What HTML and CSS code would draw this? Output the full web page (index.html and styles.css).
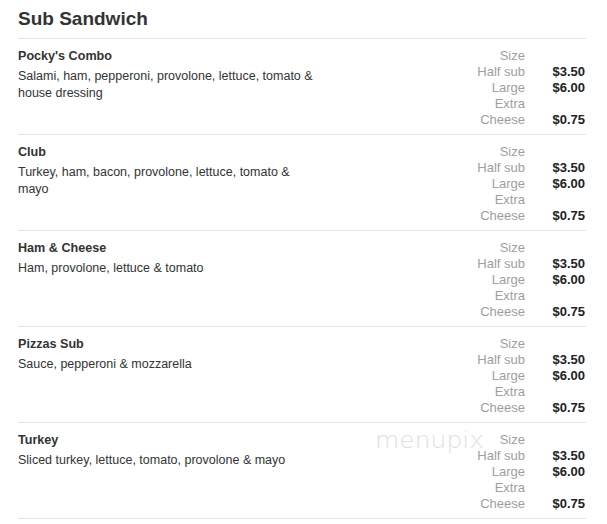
FILE: index.html
```html
<!DOCTYPE html>
<html>
<head>
<meta charset="utf-8">
<link rel="stylesheet" href="styles.css">
</head>
<body>
<div class="menu">
  <h2 class="section-title">Sub Sandwich</h2>

  <div class="item">
    <div class="info">
      <div class="name">Pocky's Combo</div>
      <div class="desc">Salami, ham, pepperoni, provolone, lettuce, tomato &amp; house dressing</div>
    </div>
    <div class="prices">
      <span class="label">Size</span><span class="price"></span>
      <span class="label">Half sub</span><span class="price">$3.50</span>
      <span class="label">Large</span><span class="price">$6.00</span>
      <span class="label">Extra</span><span class="price"></span>
      <span class="label">Cheese</span><span class="price">$0.75</span>
    </div>
  </div>

  <div class="item">
    <div class="info">
      <div class="name">Club</div>
      <div class="desc">Turkey, ham, bacon, provolone, lettuce, tomato &amp; mayo</div>
    </div>
    <div class="prices">
      <span class="label">Size</span><span class="price"></span>
      <span class="label">Half sub</span><span class="price">$3.50</span>
      <span class="label">Large</span><span class="price">$6.00</span>
      <span class="label">Extra</span><span class="price"></span>
      <span class="label">Cheese</span><span class="price">$0.75</span>
    </div>
  </div>

  <div class="item">
    <div class="info">
      <div class="name">Ham &amp; Cheese</div>
      <div class="desc">Ham, provolone, lettuce &amp; tomato</div>
    </div>
    <div class="prices">
      <span class="label">Size</span><span class="price"></span>
      <span class="label">Half sub</span><span class="price">$3.50</span>
      <span class="label">Large</span><span class="price">$6.00</span>
      <span class="label">Extra</span><span class="price"></span>
      <span class="label">Cheese</span><span class="price">$0.75</span>
    </div>
  </div>

  <div class="item">
    <div class="info">
      <div class="name">Pizzas Sub</div>
      <div class="desc">Sauce, pepperoni &amp; mozzarella</div>
    </div>
    <div class="prices">
      <span class="label">Size</span><span class="price"></span>
      <span class="label">Half sub</span><span class="price">$3.50</span>
      <span class="label">Large</span><span class="price">$6.00</span>
      <span class="label">Extra</span><span class="price"></span>
      <span class="label">Cheese</span><span class="price">$0.75</span>
    </div>
  </div>

  <div class="item">
    <div class="info">
      <div class="name">Turkey</div>
      <div class="desc">Sliced turkey, lettuce, tomato, provolone &amp; mayo</div>
    </div>
    <div class="prices">
      <span class="label">Size</span><span class="price"></span>
      <span class="label">Half sub</span><span class="price">$3.50</span>
      <span class="label">Large</span><span class="price">$6.00</span>
      <span class="label">Extra</span><span class="price"></span>
      <span class="label">Cheese</span><span class="price">$0.75</span>
    </div>
    <div class="watermark">menupix</div>
  </div>
</div>
</body>
</html>
```

FILE: styles.css
```css
html, body {
  margin: 0;
  padding: 0;
  background: #fff;
}
body {
  font-family: "Liberation Sans", Arial, sans-serif;
  color: #333;
}
.menu {
  width: 568px;
  margin-left: 18px;
  padding-top: 6px;
}
.section-title {
  margin: 0;
  font-size: 19px;
  font-weight: bold;
  line-height: 26px;
  padding-bottom: 6px;
  border-bottom: 1px solid #e3e3e3;
  color: #333;
}
.item {
  position: relative;
  display: flex;
  justify-content: space-between;
  padding: 9px 0 6px;
  border-bottom: 1px solid #e3e3e3;
}
.info {
  width: 305px;
}
.name {
  font-size: 12.6px;
  font-weight: bold;
  line-height: 16px;
  color: #333;
}
.desc {
  margin-top: 4px;
  font-size: 12.5px;
  line-height: 17px;
  color: #333;
}
.prices {
  display: grid;
  grid-template-columns: auto 60px;
  grid-auto-rows: 16px;
  font-size: 13px;
  line-height: 16px;
  margin-right: 1px;
}
.label {
  text-align: right;
  color: #a0a0a0;
}
.price {
  text-align: right;
  font-weight: bold;
  color: #222;
}
.watermark {
  position: absolute;
  left: 357px;
  top: 3px;
  font-family: "DejaVu Sans", sans-serif;
  font-weight: 200;
  font-size: 25px;
  color: #e0e0e0;
  transform: scaleY(0.9);
}
```
